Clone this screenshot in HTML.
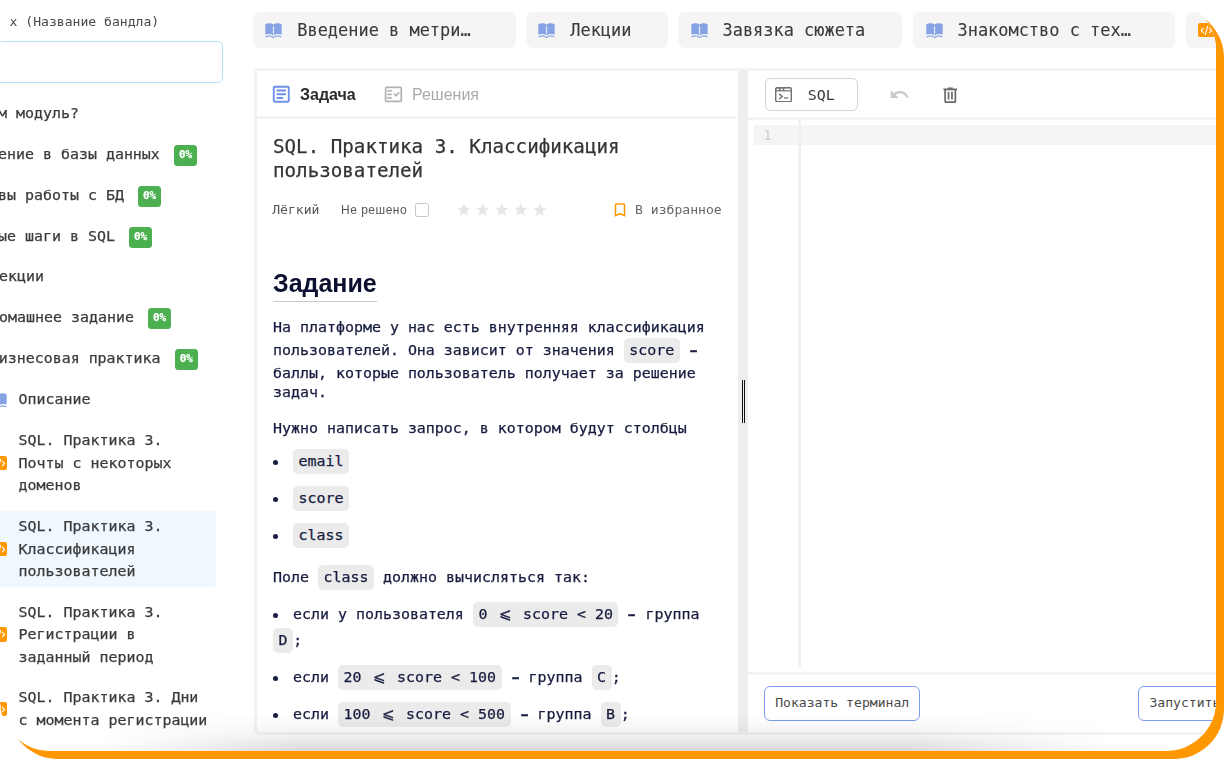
<!DOCTYPE html>
<html lang="ru">
<head>
<meta charset="utf-8">
<title>SQL. Практика 3. Классификация пользователей</title>
<style>
html,body{margin:0;padding:0;background:#fff;}
body{width:1224px;height:759px;overflow:hidden;position:relative;
  font-family:"DejaVu Sans Mono","Liberation Mono",monospace;color:#3a3a3a;}
.nav,.item .txt,.body,.ttl{-webkit-text-stroke:.25px currentColor;}
.tab .tt{-webkit-text-stroke:.1px currentColor;}
.mono{font-family:"DejaVu Sans Mono","Liberation Mono",monospace;}
.sans{font-family:"Liberation Sans","DejaVu Sans",sans-serif;-webkit-text-stroke:0;}
#card{position:absolute;left:0;top:0;width:1216px;height:751px;border-radius:50px;
  overflow:hidden;background:#fff;transform:translateZ(0);}
#frame{position:absolute;left:8px;top:8px;width:1216px;height:751px;border-radius:50px;background:#ff9800;}
.abs{position:absolute;}
svg{display:block;}

/* ---------- sidebar ---------- */
#bundle{left:1.6px;top:12px;font-size:13.1px;line-height:20px;color:#4a4a4a;white-space:nowrap;}
#search{left:-40px;top:41px;width:260.8px;height:40px;border:1.5px solid #b4e1fb;border-radius:5px;background:#fff;}
.nav{white-space:nowrap;font-size:14.95px;line-height:22.5px;color:#3b3b3b;}
.badge{display:inline-block;vertical-align:middle;margin-left:5px;width:23.4px;height:20.8px;
  border-radius:3.5px;background:#4caf50;color:#fff;font-weight:bold;font-size:11px;line-height:20.8px;
  text-align:center;position:relative;top:.4px;}
.item{left:0;width:215.8px;border-radius:0 3.5px 3.5px 0;}
.item .txt{position:absolute;left:18.5px;top:4.5px;font-size:14.95px;line-height:22.5px;color:#3b3b3b;white-space:nowrap;}
.item.sel{background:#eff8ff;}
.oic{position:absolute;left:-9.5px;width:16.8px;height:14.6px;border-radius:2px;background:#ff9800;}

/* ---------- tabs ---------- */
.tab{top:12.3px;height:36px;border-radius:7px;background:#f5f5f5;}
.tab .bk{position:absolute;left:12.2px;top:10.4px;}
.tab .tt{position:absolute;left:44.1px;top:0;font-size:16.95px;line-height:36px;height:36px;color:#3b3b3b;white-space:nowrap;}

/* ---------- workspace ---------- */
#ws{left:253.7px;top:68.2px;width:1000px;height:660.6px;border:3px solid #f3f3f3;border-radius:5px;}
#task{left:256.7px;top:71.2px;width:480.8px;height:660.6px;overflow:hidden;}
#split{left:737.5px;top:71.2px;width:10.5px;height:660.6px;background:#eeeeee;}
#editor{left:748px;top:71.2px;width:480px;height:660.6px;overflow:hidden;}
.hsep{position:absolute;left:0;right:0;height:3px;background:#f3f3f3;}
.t{position:absolute;white-space:nowrap;}
.body{font-size:14.95px;line-height:24px;color:#171c3f;}
code.c{font-family:inherit;font-size:inherit;display:inline;padding:3px 5.6px 4px;
  border-radius:5px;background:#ebebeb;}
.bul{display:inline-block;width:20px;height:5.2px;vertical-align:baseline;position:relative;}
.bul:before{content:"";position:absolute;left:0;bottom:1px;width:5.2px;height:5.2px;border-radius:50%;background:#171c3f;}
.btn{position:absolute;box-sizing:border-box;border:1px solid #7c9cf0;border-radius:6px;background:#fff;
  font-size:13.1px;color:#4a4a4a;white-space:nowrap;}
#shade{left:100px;width:1010px;top:714px;height:37px;background:linear-gradient(to top,rgba(0,0,0,.15),rgba(0,0,0,.05) 45%,rgba(0,0,0,0));-webkit-mask-image:linear-gradient(to right,transparent,#000 20%,#000 80%,transparent);mask-image:linear-gradient(to right,transparent,#000 20%,#000 80%,transparent);pointer-events:none;}
.le{display:inline-block;width:17.5px;text-align:center;}
.nd{display:inline-block;transform:scaleX(.74);font-weight:bold;}
</style>
</head>
<body>
<div id="frame"></div>
<div id="card">

  <!-- ================= SIDEBAR ================= -->
  <div id="bundle" class="abs">.x (Название бандла)</div>
  <div id="search" class="abs"></div>

  <div class="abs nav" style="left:-38px;top:102px;">Зачем модуль?</div>
  <div class="abs nav" style="left:-38px;top:142.8px;">Введение в базы данных <span class="badge">0%</span></div>
  <div class="abs nav" style="left:-38px;top:184px;">Основы работы с БД <span class="badge">0%</span></div>
  <div class="abs nav" style="left:-38px;top:224.8px;">Первые шаги в SQL <span class="badge">0%</span></div>
  <div class="abs nav" style="left:-10px;top:265px;">Лекции</div>
  <div class="abs nav" style="left:-10px;top:305.8px;">Домашнее задание <span class="badge">0%</span></div>
  <div class="abs nav" style="left:-10.3px;top:346.8px;">Бизнесовая практика <span class="badge">0%</span></div>

  <div class="abs item" style="top:383px;height:32px;">
    <svg class="abs" style="left:-10px;top:9.7px" width="17" height="15.4" viewBox="0 0 17 15.4"><path fill="#85a3e5" d="M0.3 1.5 C2.5 -0.1 6 -0.1 8.5 1.7 C11 -0.1 14.5 -0.1 16.7 1.5 L16.7 11.4 C14 10.5 10.8 10.8 8.5 12.3 C6.2 10.8 3 10.5 0.3 11.4 Z"/> <rect x="7.95" y="3.3" width="1.1" height="7.9" fill="#e9eefb"/> <path fill="none" stroke="#85a3e5" stroke-width="1.15" stroke-linecap="round" d="M1 13.8 C3.4 12.5 6.2 12.9 8.5 14.5 C10.8 12.9 13.6 12.5 16 13.8"/></svg>
    <div class="txt">Описание</div>
  </div>
  <div class="abs item" style="top:424.5px;height:76.5px;">
    <div class="oic" style="top:31px;"><svg width="16.8" height="14.6" viewBox="0 0 16.8 14.6"><g fill="none" stroke="#fff" stroke-width="1.1" stroke-linecap="butt"><path d="M5.7 4.9 L3.2 7.5 L5.7 10.1"/> <path d="M11.1 4.9 L13.6 7.5 L11.1 10.1"/> <path d="M9.7 3 L7.2 12.2"/></g></svg></div>
    <div class="txt">SQL. Практика 3.<br>Почты с некоторых<br>доменов</div>
  </div>
  <div class="abs item sel" style="top:510.5px;height:76.5px;">
    <div class="oic" style="top:31px;"><svg width="16.8" height="14.6" viewBox="0 0 16.8 14.6"><g fill="none" stroke="#fff" stroke-width="1.1" stroke-linecap="butt"><path d="M5.7 4.9 L3.2 7.5 L5.7 10.1"/> <path d="M11.1 4.9 L13.6 7.5 L11.1 10.1"/> <path d="M9.7 3 L7.2 12.2"/></g></svg></div>
    <div class="txt">SQL. Практика 3.<br>Классификация<br>пользователей</div>
  </div>
  <div class="abs item" style="top:596px;height:76.5px;">
    <div class="oic" style="top:31px;"><svg width="16.8" height="14.6" viewBox="0 0 16.8 14.6"><g fill="none" stroke="#fff" stroke-width="1.1" stroke-linecap="butt"><path d="M5.7 4.9 L3.2 7.5 L5.7 10.1"/> <path d="M11.1 4.9 L13.6 7.5 L11.1 10.1"/> <path d="M9.7 3 L7.2 12.2"/></g></svg></div>
    <div class="txt">SQL. Практика 3.<br>Регистрации в<br>заданный период</div>
  </div>
  <div class="abs item" style="top:681.8px;height:54px;">
    <div class="oic" style="top:20px;"><svg width="16.8" height="14.6" viewBox="0 0 16.8 14.6"><g fill="none" stroke="#fff" stroke-width="1.1" stroke-linecap="butt"><path d="M5.7 4.9 L3.2 7.5 L5.7 10.1"/> <path d="M11.1 4.9 L13.6 7.5 L11.1 10.1"/> <path d="M9.7 3 L7.2 12.2"/></g></svg></div>
    <div class="txt">SQL. Практика 3. Дни<br>с момента регистрации</div>
  </div>

  <!-- ================= TABS ================= -->
  <div class="abs tab" style="left:253.2px;width:262.6px;">
    <svg class="bk" width="17" height="15.4" viewBox="0 0 17 15.4"><path fill="#85a3e5" d="M0.3 1.5 C2.5 -0.1 6 -0.1 8.5 1.7 C11 -0.1 14.5 -0.1 16.7 1.5 L16.7 11.4 C14 10.5 10.8 10.8 8.5 12.3 C6.2 10.8 3 10.5 0.3 11.4 Z"/> <rect x="7.95" y="3.3" width="1.1" height="7.9" fill="#e9eefb"/> <path fill="none" stroke="#85a3e5" stroke-width="1.15" stroke-linecap="round" d="M1 13.8 C3.4 12.5 6.2 12.9 8.5 14.5 C10.8 12.9 13.6 12.5 16 13.8"/></svg>
    <div class="tt">Введение в метри…</div>
  </div>
  <div class="abs tab" style="left:526.2px;width:141.4px;">
    <svg class="bk" width="17" height="15.4" viewBox="0 0 17 15.4"><path fill="#85a3e5" d="M0.3 1.5 C2.5 -0.1 6 -0.1 8.5 1.7 C11 -0.1 14.5 -0.1 16.7 1.5 L16.7 11.4 C14 10.5 10.8 10.8 8.5 12.3 C6.2 10.8 3 10.5 0.3 11.4 Z"/> <rect x="7.95" y="3.3" width="1.1" height="7.9" fill="#e9eefb"/> <path fill="none" stroke="#85a3e5" stroke-width="1.15" stroke-linecap="round" d="M1 13.8 C3.4 12.5 6.2 12.9 8.5 14.5 C10.8 12.9 13.6 12.5 16 13.8"/></svg>
    <div class="tt">Лекции</div>
  </div>
  <div class="abs tab" style="left:678.4px;width:224px;">
    <svg class="bk" width="17" height="15.4" viewBox="0 0 17 15.4"><path fill="#85a3e5" d="M0.3 1.5 C2.5 -0.1 6 -0.1 8.5 1.7 C11 -0.1 14.5 -0.1 16.7 1.5 L16.7 11.4 C14 10.5 10.8 10.8 8.5 12.3 C6.2 10.8 3 10.5 0.3 11.4 Z"/> <rect x="7.95" y="3.3" width="1.1" height="7.9" fill="#e9eefb"/> <path fill="none" stroke="#85a3e5" stroke-width="1.15" stroke-linecap="round" d="M1 13.8 C3.4 12.5 6.2 12.9 8.5 14.5 C10.8 12.9 13.6 12.5 16 13.8"/></svg>
    <div class="tt">Завязка сюжета</div>
  </div>
  <div class="abs tab" style="left:913.4px;width:261.8px;">
    <svg class="bk" width="17" height="15.4" viewBox="0 0 17 15.4"><path fill="#85a3e5" d="M0.3 1.5 C2.5 -0.1 6 -0.1 8.5 1.7 C11 -0.1 14.5 -0.1 16.7 1.5 L16.7 11.4 C14 10.5 10.8 10.8 8.5 12.3 C6.2 10.8 3 10.5 0.3 11.4 Z"/> <rect x="7.95" y="3.3" width="1.1" height="7.9" fill="#e9eefb"/> <path fill="none" stroke="#85a3e5" stroke-width="1.15" stroke-linecap="round" d="M1 13.8 C3.4 12.5 6.2 12.9 8.5 14.5 C10.8 12.9 13.6 12.5 16 13.8"/></svg>
    <div class="tt">Знакомство с тех…</div>
  </div>
  <div class="abs tab" style="left:1186.3px;width:200px;">
    <div class="oic" style="left:11.6px;top:10.6px;"><svg width="16.8" height="14.6" viewBox="0 0 16.8 14.6"><g fill="none" stroke="#fff" stroke-width="1.1" stroke-linecap="butt"><path d="M5.7 4.9 L3.2 7.5 L5.7 10.1"/> <path d="M11.1 4.9 L13.6 7.5 L11.1 10.1"/> <path d="M9.7 3 L7.2 12.2"/></g></svg></div>
    <div class="tt">SQL. Практика 3.</div>
  </div>

  <!-- ================= WORKSPACE ================= -->
  <div id="ws" class="abs"></div>

  <div id="task" class="abs">
    <svg class="abs" style="left:13.4px;top:11.7px" width="22.5" height="22.5" viewBox="0 0 24 24"><path fill="#6f8ee6" d="M19 5v14H5V5h14m0-2H5c-1.1 0-2 .9-2 2v14c0 1.1.9 2 2 2h14c1.1 0 2-.9 2-2V5c0-1.1-.9-2-2-2z"/><path fill="#6f8ee6" d="M14 17H7v-2h7v2zm3-4H7v-2h10v2zm0-4H7V7h10v2z"/></svg>
    <div class="t sans" style="left:43.3px;top:13.4px;font-size:16px;line-height:20px;font-weight:bold;color:#2b2b2b;">Задача</div>
    <svg class="abs" style="left:125.9px;top:12.7px" width="20.9" height="20.9" viewBox="0 0 24 24"><path fill="#b3b3b3" d="M20 3H4c-1.1 0-2 .9-2 2v14c0 1.1.9 2 2 2h16c1.1 0 2-.9 2-2V5c0-1.1-.9-2-2-2zm0 16H4V5h16v14z"/><path fill="#b3b3b3" d="M19.41 10.42 17.99 9l-3.17 3.17-1.41-1.42L12 12.16 14.82 15zM5 7h5v2H5zM5 11h5v2H5zM5 15h5v2H5z"/></svg>
    <div class="t sans" style="left:155.3px;top:13.4px;font-size:16px;line-height:20px;color:#aaaaaa;">Решения</div>
    <div class="hsep" style="top:45.3px;"></div>

    <div class="t ttl" style="left:16.3px;top:64.3px;font-size:19.2px;line-height:23.25px;color:#333;">SQL. Практика 3. Классификация<br>пользователей</div>

    <div class="t" style="left:15.5px;top:130.7px;font-size:13.1px;line-height:16px;color:#555;">Лёгкий</div>
    <div class="t sans" style="left:84.3px;top:131.1px;font-size:12px;line-height:16px;letter-spacing:.5px;color:#555;">Не решено</div>
    <div class="abs" style="left:158.3px;top:132.2px;width:12px;height:12px;border:1px solid #c6c6c6;border-radius:2.5px;background:#fff;"></div>
    <svg class="abs" style="left:199.7px;top:130.5px" width="96" height="16" viewBox="0 0 147.7 24.6"><g fill="#e6e6e6"><path transform="translate(0 0)" d="M12 17.27L18.18 21l-1.64-7.03L22 9.24l-7.19-.61L12 2 9.19 8.63 2 9.24l5.46 4.73L5.82 21z"/><path transform="translate(29.23 0)" d="M12 17.27L18.18 21l-1.64-7.03L22 9.24l-7.19-.61L12 2 9.19 8.63 2 9.24l5.46 4.73L5.82 21z"/><path transform="translate(58.46 0)" d="M12 17.27L18.18 21l-1.64-7.03L22 9.24l-7.19-.61L12 2 9.19 8.63 2 9.24l5.46 4.73L5.82 21z"/><path transform="translate(87.69 0)" d="M12 17.27L18.18 21l-1.64-7.03L22 9.24l-7.19-.61L12 2 9.19 8.63 2 9.24l5.46 4.73L5.82 21z"/><path transform="translate(116.92 0)" d="M12 17.27L18.18 21l-1.64-7.03L22 9.24l-7.19-.61L12 2 9.19 8.63 2 9.24l5.46 4.73L5.82 21z"/></g></svg>
    <svg class="abs" style="left:354.5px;top:130.3px" width="18" height="18" viewBox="0 0 24 24"><path fill="#ff9800" d="M17 3H7c-1.1 0-1.99.9-1.99 2L5 21l7-3 7 3V5c0-1.1-.9-2-2-2zm0 15l-5-2.18L7 18V5h10v13z"/></svg>
    <div class="t" style="left:378.3px;top:130.7px;font-size:13.1px;line-height:16px;color:#666;">В избранное</div>

    <div class="t sans" style="left:16.3px;top:197.1px;font-size:25px;line-height:30px;font-weight:bold;color:#0b1030;border-bottom:1px solid #c9c9c9;padding-bottom:2.7px;">Задание</div>

    <div class="t body" style="left:16.3px;top:243.9px;">На платформе у нас есть внутренняя классификация</div>
    <div class="t body" style="left:16.3px;top:267px;">пользователей. Она зависит от значения <code class="c">score</code> <span class="nd">–</span></div>
    <div class="t body" style="left:16.3px;top:290.2px;">баллы, которые пользователь получает за решение</div>
    <div class="t body" style="left:16.3px;top:309.2px;">задач.</div>
    <div class="t body" style="left:16.3px;top:345.1px;">Нужно написать запрос, в котором будут столбцы</div>
    <div class="t body" style="left:16.3px;top:378.3px;"><span class="bul"></span><code class="c">email</code></div>
    <div class="t body" style="left:16.3px;top:415px;"><span class="bul"></span><code class="c">score</code></div>
    <div class="t body" style="left:16.3px;top:452px;"><span class="bul"></span><code class="c">class</code></div>
    <div class="t body" style="left:16.3px;top:494.1px;">Поле <code class="c">class</code> должно вычисляться так:</div>
    <div class="t body" style="left:16.3px;top:531px;"><span class="bul"></span>если у пользователя <code class="c">0 <span class="le">⩽</span> score &lt; 20</code> <span class="nd">–</span> группа</div>
    <div class="t body" style="left:16.3px;top:556.5px;"><code class="c">D</code>;</div>
    <div class="t body" style="left:16.3px;top:593.8px;"><span class="bul"></span>если <code class="c">20 <span class="le">⩽</span> score &lt; 100</code> <span class="nd">–</span> группа <code class="c">C</code>;</div>
    <div class="t body" style="left:16.3px;top:630.6px;"><span class="bul"></span>если <code class="c">100 <span class="le">⩽</span> score &lt; 500</code> <span class="nd">–</span> группа <code class="c">B</code>;</div>
  </div>

  <div id="split" class="abs">
    <div class="abs" style="left:4.5px;top:309px;width:1px;height:43px;background:#111;"></div>
    <div class="abs" style="left:6.5px;top:309px;width:1px;height:43px;background:#111;"></div>
  </div>

  <div id="editor" class="abs">
    <div class="abs" style="left:16.5px;top:6.8px;width:91.4px;height:31px;border:1.3px solid #d2d2d2;border-radius:5.5px;"></div>
    <svg class="abs" style="left:27.2px;top:15.6px" width="17" height="15.5" viewBox="0 0 17 15.5"><rect x="0.7" y="0.7" width="15.6" height="14.1" rx="1.5" fill="none" stroke="#727272" stroke-width="1.4"/><rect x="0.7" y="0.7" width="15.6" height="3.7" fill="#727272"/><g fill="#fff"><rect x="1.7" y="1.6" width="2.1" height="1.6"/><rect x="5.6" y="1.6" width="2.1" height="1.6"/><rect x="9.3" y="1.6" width="6.2" height="1.6"/></g><g fill="none" stroke="#727272" stroke-width="1.4"><path d="M4.1 6.9 L7.3 9.45 L4.1 12"/><path d="M9 11H13.3" stroke-width="1.3"/></g></svg>
    <div class="t" style="left:59.8px;top:13.5px;font-size:14.95px;line-height:20px;color:#3a3a3a;">SQL</div>
    <svg class="abs" style="left:141.4px;top:13.3px" width="21" height="21" viewBox="0 0 24 24"><path fill="#c9c9c9" d="M12.5 8c-2.65 0-5.05.99-6.9 2.6L2 7v9h9l-3.62-3.62c1.39-1.16 3.16-1.88 5.12-1.88 3.54 0 6.55 2.31 7.6 5.5l2.37-.78C21.08 11.03 17.15 8 12.5 8z"/></svg>
    <svg class="abs" style="left:192px;top:13.4px" width="20.5" height="20.5" viewBox="0 0 24 24"><path fill="#6a6a6a" d="M7 21q-.825 0-1.412-.587Q5 19.825 5 19V6H4V4h5V3h6v1h5v2h-1v13q0 .825-.587 1.413Q17.825 21 17 21ZM17 6H7v13h10ZM9 17h2V8H9Zm4 0h2V8h-2Z"/></svg>
    <div class="hsep" style="top:46.1px;height:2.8px;"></div>

    <div class="abs" style="left:5.8px;top:53.6px;width:500px;height:20.2px;background:#f5f5f5;"></div>
    <div class="abs" style="left:49.8px;top:48.9px;width:3.2px;height:547.4px;background:#f1f1f1;"></div>
    <div class="t" style="left:15.2px;top:54px;font-size:14px;line-height:20px;color:#c9ccd3;">1</div>

    <div class="hsep" style="top:600.7px;"></div>
    <div class="btn" style="left:16.4px;top:614.8px;width:155.6px;height:34.8px;line-height:32.8px;text-align:center;">Показать терминал</div>
    <div class="btn" style="left:390.3px;top:614.8px;width:120px;height:34.8px;line-height:32.8px;padding-left:10.1px;">Запустить</div>
  </div>

  <!-- soft shadow along the bottom -->
  <div class="abs" id="shade"></div>
</div>
</body>
</html>
